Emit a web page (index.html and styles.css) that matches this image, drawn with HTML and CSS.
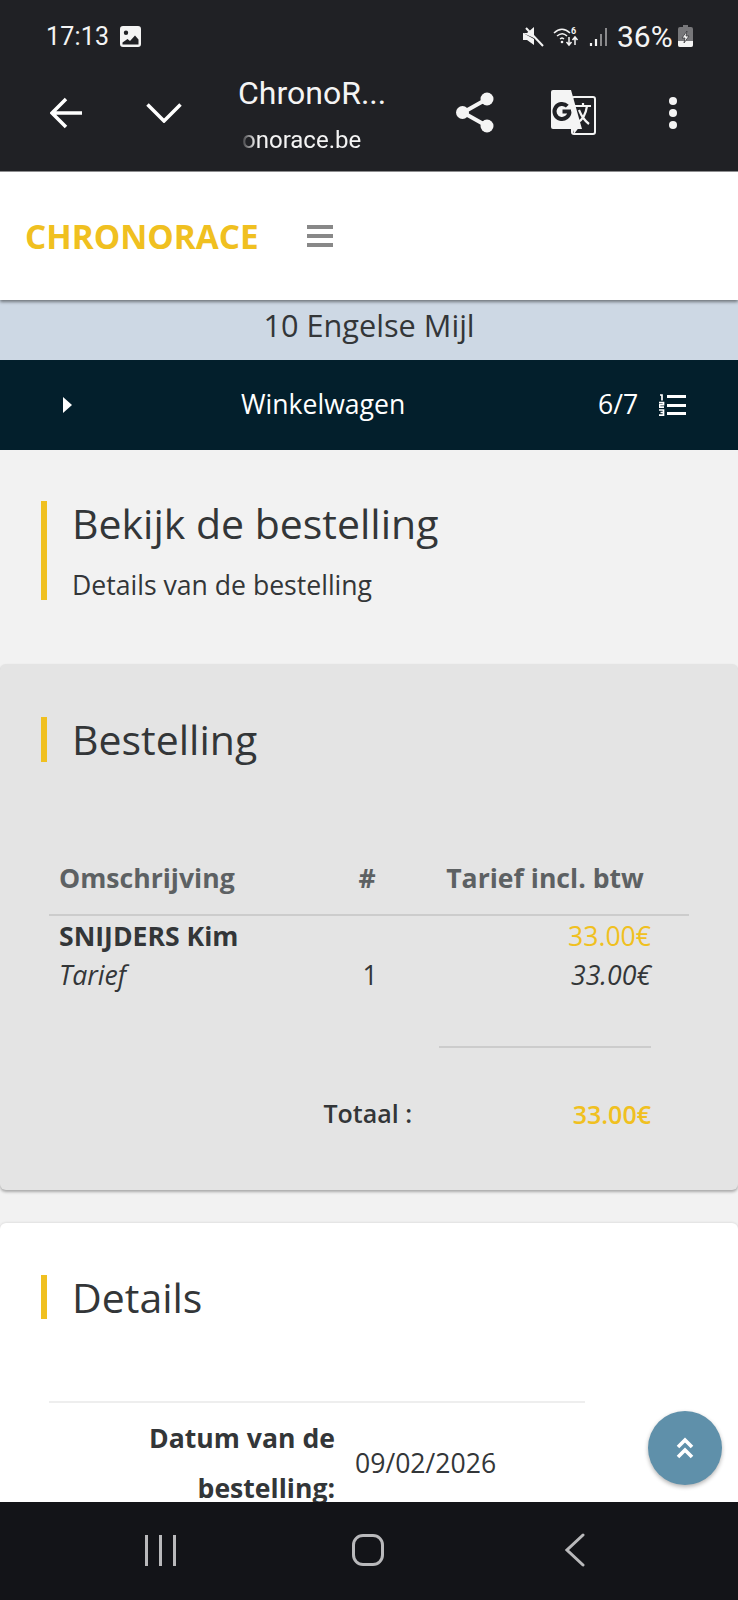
FILE: index.html
```html
<!DOCTYPE html>
<html lang="nl">
<head>
  <meta charset="utf-8" />
  <meta name="viewport" content="width=device-width, initial-scale=1" />
  <title>ChronoRace – Winkelwagen</title>
  <link rel="stylesheet" href="styles.css">
</head>
<body>
  <div class="phone">
    <!-- system + browser chrome -->
    <div class="chrome">
      <div class="status">
        <span class="clock">17:13</span>
        <svg class="st-img" viewBox="0 0 21 21"><path fill-rule="evenodd" fill="#f4f4f4" d="M3 0h15a3 3 0 0 1 3 3v15a3 3 0 0 1-3 3H3a3 3 0 0 1-3-3V3a3 3 0 0 1 3-3zM6 4.500a2.200 2.200 0 1 0 0 4.400 2.200 2.200 0 0 0 0-4.400zM2.500 16.500v2h16v-5l-3.500-4-5 5.500-2.500-2z"/></svg>
        <span class="status-gap"></span>
        <svg class="st-mute" viewBox="0 0 21 21"><path fill="#f4f4f4" d="M0 7h4l7-6v11zM0 7v7h4l7 5v-6z"/><path stroke="#f4f4f4" stroke-width="2" d="M3 2l17 18"/></svg>
        <svg class="st-wifi" viewBox="0 0 27 21"><g fill="none" stroke="#f4f4f4" stroke-width="1.500"><path d="M1 7c5-5 11-5 16 0"/><path d="M4 10c3.500-3 7-3 10 0"/><path d="M7 13c2-1.500 2-1.500 4 0"/></g><circle cx="9" cy="16" r="1.300" fill="#f4f4f4"/><path stroke="#f4f4f4" stroke-width="1.500" fill="none" d="M16 11v8m-2.500-3l2.500 3 2.500-3M22 19v-8m-2.500 3l2.500-3 2.500 3"/><text x="18" y="7.500" class="st-six">6</text></svg>
        <svg class="st-signal" viewBox="0 0 19 21"><path stroke-width="2.200" stroke="#f4f4f4" d="M2 20v-3M7 20v-7"/><path stroke-width="2" stroke="#8a8a8c" d="M12 20v-12M17 20V2"/></svg>
        <span class="pct">36%</span>
        <svg class="st-batt" viewBox="0 0 15 22"><path fill="#77777a" d="M5 0h5v2h3a2 2 0 0 1 2 2v16a2 2 0 0 1-2 2H2a2 2 0 0 1-2-2V4a2 2 0 0 1 2-2h3z"/><path fill="#f4f4f4" d="M0 16h15v4a2 2 0 0 1-2 2H2a2 2 0 0 1-2-2z"/><path fill="#f4f4f4" stroke="#3a3a3d" stroke-width=".8" d="M9 6L4 13h3l-1 5 5-7H8z"/></svg>
      </div>
      <div class="appbar">
        <svg class="ic-back" viewBox="0 0 32 32"><path fill="none" stroke="#fff" stroke-width="3.500" d="M16 2L2 16l14 14M2 16h30"/></svg>
        <svg class="ic-chev" viewBox="0 0 36 20"><path fill="none" stroke="#fff" stroke-width="3.500" d="M1.500 1.500L18 18 34.500 1.500"/></svg>
        <div class="page-title">
          <div class="title-main">ChronoR...</div>
          <div class="title-url">onorace.be</div>
        </div>
        <svg class="ic-share" viewBox="0 0 38 41"><path fill="none" stroke="#f4f4f4" stroke-width="4" d="M31 7L7 20.500 31 34"/><circle cx="31" cy="7" r="6.500" fill="#f4f4f4"/><circle cx="6.500" cy="20.500" r="6.500" fill="#f4f4f4"/><circle cx="31" cy="34" r="6.500" fill="#f4f4f4"/></svg>
        <svg class="ic-translate" viewBox="0 0 45 45"><rect x="21" y="7" width="23" height="37" rx="2" fill="#202125" stroke="#f4f4f4" stroke-width="2"/><path fill="#f4f4f4" d="M2 0h18l11 39H2a2 2 0 0 1-2-2V2a2 2 0 0 1 2-2z"/><path fill="none" stroke="#202125" stroke-width="4" d="M20 21.500h-8.500M18.500 21.500a7.500 7.500 0 1 1-2.200-5.300"/><path fill="none" stroke="#f4f4f4" stroke-width="2.200" d="M24 16h16M32 13v3M26 33c6-3 9-10 10-17M28 20c2 5 6 11 10 14"/><path fill="#f4f4f4" d="M21 36l8 0-6 8z"/></svg>
        <svg class="ic-kebab" viewBox="0 0 8 32"><circle cx="4" cy="4" r="4" fill="#f4f4f4"/><circle cx="4" cy="16" r="4" fill="#f4f4f4"/><circle cx="4" cy="28" r="4" fill="#f4f4f4"/></svg>
      </div>
    </div>

    <main class="viewport">
      <header class="site-head">
        <span class="logo">CHRONORACE</span>
        <span class="burger"><i></i><i></i><i></i></span>
      </header>
      <div class="race-band">10 Engelse Mijl</div>
      <nav class="step-bar">
        <span class="step-arrow"></span>
        <span class="step-name">Winkelwagen</span>
        <span class="step-count">6/7</span>
        <svg class="step-list" viewBox="0 0 27 22"><path fill="#fff" d="M8 1h19v3H8zM8 10h19v3H8zM8 18h19v3H8z"/><path stroke="#fff" stroke-width="1.700" fill="none" d="M1 1h2v5.500M0 8.500h4.500v2.200H.5v2.500h4.500M0 16h4.500v5.200H0M1.500 18.500h3"/></svg>
      </nav>

      <section class="intro">
        <div class="heading heading-tall">
          <h1>Bekijk de bestelling</h1>
          <p>Details van de bestelling</p>
        </div>
      </section>

      <section class="card card-grey">
        <div class="heading"><h2>Bestelling</h2></div>
        <table class="order">
          <colgroup><col class="c1"><col class="c2"><col class="c3"><col class="c4"><col class="c5"></colgroup>
          <thead>
            <tr><th class="tl">Omschrijving</th><th class="hash">#</th><th></th><th>Tarief incl. btw</th><th></th></tr>
          </thead>
          <tbody>
            <tr class="r-name"><td class="tl"><strong>SNIJDERS Kim</strong></td><td></td><td></td><td class="tr gold">33.00€</td><td></td></tr>
            <tr class="r-item"><td class="tl"><em>Tarief</em></td><td class="qty">1</td><td></td><td class="tr"><em>33.00€</em></td><td></td></tr>
            <tr class="r-rule"><td colspan="3"></td><td class="ruled"></td><td></td></tr>
            <tr class="r-total"><td colspan="3" class="total-label">Totaal :</td><td class="tr gold total-val">33.00€</td><td></td></tr>
          </tbody>
        </table>
      </section>

      <section class="card card-white">
        <div class="heading"><h2>Details</h2></div>
        <div class="detail-row">
          <div class="detail-label">Datum van de bestelling:</div>
          <div class="detail-value">09/02/2026</div>
        </div>
      </section>

      <a class="to-top" href="#" aria-label="Naar boven">
        <svg viewBox="0 0 18 22"><path fill="none" stroke="#fff" stroke-width="3.600" d="M2 10l7-7 7 7M2 20l7-7 7 7"/></svg>
      </a>
    </main>

    <!-- android nav -->
    <div class="sysnav">
      <span class="sys-recent"><i></i><i></i><i></i></span>
      <span class="sys-home"></span>
      <svg class="sys-back" viewBox="0 0 20 34"><path fill="none" stroke="#b9b9bb" stroke-width="3" stroke-linecap="round" d="M18 2L2 17l16 15"/></svg>
    </div>
  </div>
</body>
</html>
```

FILE: styles.css
```css
/* Tokens */
:root{
  --gold:#f0c020;
  --ink:#333638;
  --chrome:#202125;
}

*,*::before,*::after{box-sizing:border-box;margin:0;padding:0;}

body{
  font-family:"Open Sans",sans-serif;
  color:var(--ink);
  background:#f2f2f2;
}

.phone{
  display:flex;
  flex-direction:column;
  height:1600px;
  overflow:hidden;
}

/* === Browser chrome === */
.chrome{
  flex:none;
  height:172px;
  background:var(--chrome);
  border-bottom:1px solid #8d8d8f;
  font-family:Roboto,sans-serif;
  color:#f4f4f4;
}

.status{
  display:flex;
  align-items:center;
  height:54px;
  padding:18px 0 0 46px;
}
.clock{font-size:25px;width:74px;letter-spacing:.2px;}
.st-img{width:21px;height:21px;}
.status-gap{flex:1;}
.st-mute{width:21px;height:21px;margin-right:9px;}
.st-wifi{width:27px;height:21px;margin-right:9px;}
.st-six{font:bold 9px Roboto,sans-serif;fill:#f4f4f4;}
.st-signal{width:19px;height:21px;margin-right:9px;}
.pct{font-size:30px;width:61px;}
.st-batt{width:15px;height:22px;margin-right:45px;}

.appbar{
  display:flex;
  align-items:center;
  height:117px;
}
.ic-back{width:32px;height:32px;margin-left:50px;}
.ic-chev{width:36px;height:20px;margin-left:64px;}
.page-title{width:218px;margin:1px 0 0 56px;}
.title-main{font-size:32px;line-height:46px;}
.title-url{
  font-size:24px;
  line-height:32px;
  margin-top:8px;
  padding-left:4px;
  -webkit-mask-image:linear-gradient(90deg,transparent 2px,#000 18px);
  mask-image:linear-gradient(90deg,transparent 2px,#000 18px);
}
.ic-share{width:38px;height:41px;}
.ic-translate{width:45px;height:45px;margin-left:57px;}
.ic-kebab{width:8px;height:32px;margin-left:73px;}

/* === Page === */
.viewport{
  position:relative;
  flex:1;
  min-height:0;
  overflow:hidden;
}

.site-head{
  position:relative;
  z-index:2;
  display:flex;
  align-items:center;
  height:128px;
  padding:0 0 0 25px;
  background:#fff;
  box-shadow:0 2px 3px rgba(0,0,0,.45);
}
.logo{font-size:33.300px;font-weight:700;color:var(--gold);width:282px;margin-top:-1px;}
.burger{display:flex;flex-direction:column;gap:5px;width:26px;}
.burger i{display:block;height:4px;background:#888;}

.race-band{
  height:60px;
  line-height:51px;
  text-align:center;
  font-size:30.700px;
  background:#cdd8e4;
}

.step-bar{
  display:flex;
  align-items:center;
  height:90px;
  padding:0 52px 0 63px;
  background:#031f2c;
  color:#fff;
  font-size:26.600px;
}
.step-arrow{
  width:0;height:0;
  border-left:9px solid #fff;
  border-top:8px solid transparent;
  border-bottom:8px solid transparent;
}
.step-name{margin:-2px 0 0 169px;width:357px;}
.step-count{width:61px;margin-top:-2px;}
.step-list{width:27px;height:22px;}

.intro{
  height:214px;
  padding:51px 0 0 41px;
}

.heading{
  border-left:6px solid var(--gold);
  padding-left:25px;
}
.heading-tall{height:99px;}
h1{font-size:41px;font-weight:400;line-height:44px;}
.heading p{font-size:26.600px;line-height:36px;margin-top:22px;}
h2{font-size:41px;font-weight:400;line-height:44px;}
.card-grey h2{line-height:45px;}

.card{
  border-radius:6px 6px 0 0;
  padding:52px 0 0 41px;
}
.card-grey{
  height:526px;
  padding-top:53px;
  background:#e4e4e4;
  box-shadow:0 2px 3px rgba(0,0,0,.3);
  border-radius:6px;
  margin-bottom:33px;
}
.card-white{
  height:300px;
  background:#fff;
  box-shadow:0 0 3px rgba(0,0,0,.15);
}

/* Order table */
.order{
  table-layout:fixed;
  border-collapse:collapse;
  width:640px;
  margin:79px 0 0 8px;
  font-size:26.600px;
}
.c1{width:290px;}
.c2{width:58px;}
.c3{width:42px;}
.c4{width:212px;}
.c5{width:38px;}
.order th{
  height:74px;
  padding-top:1px;
  color:#5d6163;
  font-weight:700;
  text-align:center;
  border-bottom:2px solid #ccc;
  white-space:nowrap;
}
.order th.tl,.order td.tl{text-align:left;padding-left:10px;}
.order th.hash{padding-right:2px;}
.tr{text-align:right;}
.gold{color:var(--gold);}
.qty{text-align:center;padding-left:4px;}
.r-name td{height:40px;}
.r-item td{height:40px;}
.r-rule td{height:52px;}
.r-rule td.ruled{border-bottom:2px solid #ccc;}
.r-total td{height:100px;padding-top:32px;font-size:25px;font-weight:600;}
.r-total .total-label{text-align:right;padding-right:27px;}

/* Details */
.detail-row{
  display:flex;
  align-items:center;
  width:536px;
  margin:82px 0 0 8px;
  border-top:2px solid #eee;
  padding-top:10px;
  font-size:26.600px;
}
.detail-label{
  width:286px;
  text-align:right;
  font-weight:700;
  line-height:50px;
}
.detail-value{margin-left:20px;}

.to-top{
  position:absolute;
  right:16px;
  bottom:17px;
  display:flex;
  align-items:center;
  justify-content:center;
  width:74px;
  height:74px;
  border-radius:50%;
  background:#5f90aa;
  box-shadow:0 2px 4px rgba(0,0,0,.3);
}
.to-top svg{width:18px;height:22px;}

/* === System nav === */
.sysnav{
  flex:none;
  display:flex;
  align-items:center;
  height:98px;
  padding:0 0 2px 145px;
  background:#131418;
}
.sys-recent{display:flex;gap:11px;width:207px;}
.sys-recent i{display:block;width:3px;height:31px;background:#b9b9bb;}
.sys-home{
  width:32px;height:32px;
  border:3px solid #b9b9bb;
  border-radius:11px;
}
.sys-back{width:20px;height:34px;margin-left:181px;}
```
